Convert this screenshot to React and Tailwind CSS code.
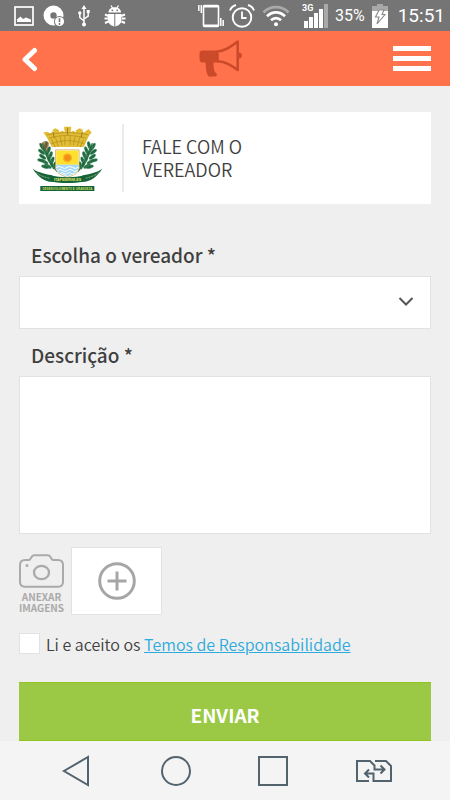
import React from "react";

function ImageIcon() {
  return (
    <svg className="h-5 w-5" viewBox="0 0 20 20" fill="none" aria-hidden="true">
      <rect x="1" y="1" width="18" height="18" stroke="#fff" strokeWidth="1.7" />
      <path d="M3 16V13.5L6.5 10.5 9 13 12 11.5 17 13.5V16Z" fill="#fff" />
    </svg>
  );
}

function DiscIcon() {
  return (
    <svg className="h-[22px] w-[22px]" viewBox="0 0 22 22" aria-hidden="true">
      <path fillRule="evenodd" fill="#fff" d="M10.5 0.5a10 10 0 1 0 0 20a10 10 0 0 0 0-20zm0 6.800a3.200 3.200 0 1 1 0 6.400a3.200 3.200 0 0 1 0-6.400z" />
      <circle cx="16.500" cy="16.500" r="5.500" fill="#757575" />
      <circle cx="16.500" cy="16.500" r="4.600" fill="#fff" />
      <path d="M16.500 13.200v4" stroke="#757575" strokeWidth="1.600" />
      <circle cx="16.500" cy="19" r="0.900" fill="#757575" />
    </svg>
  );
}

function UsbIcon() {
  return (
    <svg className="h-[22px] w-3" viewBox="0 0 12 22" fill="none" stroke="#fff" strokeWidth="1.500" aria-hidden="true">
      <path d="M6 3v16M6 16L1.800 12.500V8M6 14l4.200-3V7" />
      <path d="M6 0L8.500 4H3.500Z" fill="#fff" stroke="none" />
      <circle cx="6" cy="19.500" r="2" fill="#fff" stroke="none" />
      <circle cx="1.800" cy="8" r="1.700" fill="#fff" stroke="none" />
      <rect x="8.700" y="5" width="3" height="3" fill="#fff" stroke="none" />
    </svg>
  );
}

function BugIcon() {
  return (
    <svg className="h-[22px] w-[22px]" viewBox="0 0 22 22" aria-hidden="true">
      <path d="M7 0.500l1.500 2.500M14.500 0.500L13 3" stroke="#fff" strokeWidth="1.300" />
      <path d="M4.500 7.500C4.500 0.500 17 0.500 17 7.500Z" fill="#fff" />
      <path d="M4 9h13.500v5.500c0 9-13.500 9-13.500 0Z" fill="#fff" />
      <path d="M0.500 13.500H4M1 9.500L4.500 11M1 18l3.500-1.500M21.500 13.500H18M21 9.500L17 11M21 18l-3.500-1.500" stroke="#fff" strokeWidth="2" />
      <path d="M10.800 9v12" stroke="#757575" strokeWidth="1" />
      <circle cx="8.300" cy="5.300" r="0.900" fill="#757575" />
      <circle cx="13.200" cy="5.300" r="0.900" fill="#757575" />
    </svg>
  );
}

function VibrateIcon() {
  return (
    <svg className="h-6 w-[26px]" viewBox="0 0 26 24" fill="none" stroke="#fff" aria-hidden="true">
      <rect x="5.500" y="1.500" width="15" height="21" rx="1" strokeWidth="1.600" />
      <path d="M5.500 2.200h15M5.500 21.800h15" strokeWidth="2.600" />
      <path d="M3.300 1v8M0.800 1v6M22.800 14v8M25.200 16v6" strokeWidth="1.500" />
    </svg>
  );
}

function AlarmIcon() {
  return (
    <svg className="h-6 w-[26px]" viewBox="0 0 26 24" fill="none" stroke="#fff" aria-hidden="true">
      <circle cx="13" cy="13.500" r="9.300" strokeWidth="1.900" />
      <path d="M13 7.500V14h4.500" strokeWidth="1.800" />
      <path d="M1 6.500C2 3.500 4 1.800 7 1M25 6.500c-1-3-3-4.700-6-5.500" strokeWidth="1.900" />
    </svg>
  );
}

function WifiIcon() {
  return (
    <svg className="h-[22px] w-7" viewBox="0 0 28 22" fill="none" strokeWidth="2.700" aria-hidden="true">
      <path d="M1.500 7.500C8 0.300 20 0.300 26.500 7.500" stroke="#a9a9a9" />
      <path d="M5 11.300c5-5.300 13-5.300 18 0M9 15.300c3-3 7-3 10 0" stroke="#fff" />
      <circle cx="14" cy="19.300" r="2" fill="#fff" />
    </svg>
  );
}

function SignalIcon() {
  return (
    <svg className="h-6 w-[26px]" viewBox="0 0 26 24" aria-hidden="true">
      <path fill="#fff" d="M2 17h4v7H2zM7 13h4v11H7zM12 9h4v15h-4zM17 5h4v19h-4z" />
      <path fill="#a9a9a9" d="M22 0h4v24h-4z" />
      <text x="0" y="7" fill="#fff" className="font-['Roboto',sans-serif] text-[9px] font-bold">3G</text>
    </svg>
  );
}

function BatteryIcon() {
  return (
    <svg className="h-6 w-4" viewBox="0 0 16 24" aria-hidden="true">
      <path fill="#a9a9a9" d="M5 0h6v2h5v6H0V2h5z" />
      <path fill="#fff" d="M0 7h16v17H0z" />
      <path d="M7 6h5l-2 4.500h3L5 20l2-7H3.500Z" fill="#fff" stroke="#8a8a8a" strokeWidth="1.100" />
    </svg>
  );
}

function MegaphoneIcon() {
  return (
    <svg className="h-[38px] w-11" viewBox="0 0 44 38" aria-hidden="true">
      <path fill="#cb4a2a" d="M4 10.500H18.500V22.500H14.500C14.500 28 15 31.500 17.500 33.500C18.500 35 17.500 36.500 16 36.500H9.500C7 33 7 27 6.500 22.500H4C1.500 22.500 0.500 21.500 0.500 19V14C0.500 11.500 1.500 10.500 4 10.500Z" />
      <path d="M18.500 11.500C27 11 32.500 6 38.700 1.500V30C32.500 25.500 27 21.500 18.500 21.200Z" fill="none" stroke="#cb4a2a" strokeWidth="2.500" strokeLinejoin="round" />
      <path fill="#cb4a2a" d="M40 12.500c4 0 4 6 0 6z" />
    </svg>
  );
}

const leaves = [
  [96, 136, 60], [108, 132, 105], [95, 152, 35], [116, 147, 110], [98, 167, 35],
  [122, 162, 110], [104, 182, 30], [127, 178, 110], [114, 195, 30], [134, 193, 105],
  [103, 143, 75], [111, 159, 70], [117, 174, 70], [125, 189, 65], [94, 178, 15], [106, 197, 15],
];

function Branch() {
  return (
    <g>
      <path d="M98 126C108 165 121 190 142 211" fill="none" stroke="#17643a" strokeWidth="4" />
      {leaves.map(([x, y, a]) => (
        <ellipse key={x + "-" + y} cx={x} cy={y} rx="12" ry="5" fill="#1d6b3f" stroke="#8fb399" strokeWidth="0.800" transform={`rotate(${a} ${x} ${y})`} />
      ))}
    </g>
  );
}

function CoatOfArms() {
  return (
    <svg className="h-[67px] w-[71px] shrink-0" viewBox="66 72 214 200" role="img" aria-label="Brasão de Itapemirim">
      <path d="M100 94L112 91 120 96 132 90 127 86 137 81 148 87 147 93 158 88 165 93 163 83 163 76H184V83L182 93 190 88 199 93 198 87 210 81 220 86 215 94 225 92 236 83 246 94 238 103 222 137H126L110 107Z" fill="#e0bd35" />
      <path d="M111 101C150 92 195 92 236 101M117 111C150 100 195 100 230 111" fill="none" stroke="#b8921f" strokeWidth="2.500" />
      <path d="M125 114L136 138M137 109l8 27M151 106l5 26M165 105v26M181 105v26M196 106l-5 26M210 109l-8 27M222 114l-11 24M123 128c28-13 72-13 101 0" fill="none" stroke="#b8921f" strokeWidth="2.500" />
      <path d="M129 91l4 19M173 79v22M218 91l-4 19" stroke="#a37f1b" strokeWidth="3" />
      <Branch />
      <g transform="translate(346 0) scale(-1 1)"><Branch /></g>
      <path d="M94 127c5-9 16-11 24-1l-5 25c-8-4-14-12-19-24Z" fill="#8b5e32" opacity=".65" />
      <path d="M137 146H208V198C208 216 192 222 173 229C154 222 137 216 137 198Z" fill="#f7fcff" stroke="#bd9b40" strokeWidth="2" />
      <path d="M139 148H206V191H139Z" fill="#ffe02f" />
      <path d="M139 191H206V200C205 214 190 219 173 225C155 219 140 214 139 200Z" fill="#a4d8f3" />
      <path d="M140 199q8-6 16 0t16 0 16 0 17 0M143 208q8-6 15 0t15 0 15 0 15 0M151 217q6-5 11 0t11 0 11 0 11 0" stroke="#fff" strokeWidth="3" fill="none" />
      <circle cx="173" cy="170" r="11" fill="#f79b16" stroke="#f79b16" strokeWidth="6" strokeDasharray="2 2" />
      <circle cx="173" cy="170" r="7" fill="#ef8c1c" />
      <path d="M68 202C84 215 102 217 127 223L132 242C111 245 84 230 68 202ZM278 202C262 215 244 217 219 223L214 242C235 245 262 230 278 202Z" fill="#17643a" />
      <path d="M120 222C151 231 195 231 226 222L221 242C190 247 155 247 125 242Z" fill="#126536" />
      <path d="M78 215c14 10 28 13 42 17M268 215c-14 10-28 13-42 17" fill="none" stroke="#d7e1b3" strokeWidth="2" strokeDasharray="3 2" />
      <text x="173" y="239" textAnchor="middle" fill="#f1e46b" className="font-['Liberation_Sans',sans-serif] text-[11px] font-bold">ITAPEMIRIM-ES</text>
      <path d="M91 255H254V270H91Z" fill="#126536" />
      <text x="173" y="266" textAnchor="middle" fill="#d5da62" className="font-['Liberation_Sans',sans-serif] text-[9px] font-bold">DESENVOLVIMENTO E GRANDEZA</text>
    </svg>
  );
}

function CameraIcon() {
  return (
    <svg className="h-[34px] w-[45px]" viewBox="0 0 45 34" fill="none" stroke="#aaa" strokeWidth="2" aria-hidden="true">
      <path d="M6 6H10C12 6 12 1.200 15 1.200H29C32 1.200 32 6 34 6H39C42 6 44 8 44 11V28C44 31 42 32.700 39 32.700H6C3 32.700 1 31 1 28V11C1 8 3 6 6 6Z" />
      <ellipse cx="22.500" cy="18.500" rx="7.500" ry="6.700" strokeWidth="2.300" />
      <circle cx="8" cy="11.500" r="1.500" fill="#aaa" stroke="none" />
    </svg>
  );
}

export default function App() {
  return (
    <div className="flex min-h-screen flex-col bg-[#efefef] font-['Noto_Sans_CJK_SC',sans-serif] text-[#3f3f3f]">
      <div className="flex h-[31px] shrink-0 items-center justify-between bg-[#757575] pr-[5px] pl-[14px] font-['Roboto',sans-serif] text-white">
        <div className="flex items-center">
          <ImageIcon />
          <div className="ml-[9px]"><DiscIcon /></div>
          <div className="ml-[13px]"><UsbIcon /></div>
          <div className="ml-[14px]"><BugIcon /></div>
        </div>
        <div className="flex items-center">
          <VibrateIcon />
          <div className="ml-[5px]"><AlarmIcon /></div>
          <div className="ml-[7px]"><WifiIcon /></div>
          <div className="ml-3"><SignalIcon /></div>
          <span className="ml-[7px] text-base leading-6">35%</span>
          <div className="ml-[7px]"><BatteryIcon /></div>
          <span className="ml-[10px] text-[19px] leading-6">15:51</span>
        </div>
      </div>

      <header className="flex h-[55px] shrink-0 items-center justify-between bg-[#ff724c] px-[19px]">
        <button type="button" aria-label="Voltar" className="flex w-[30px] items-center">
          <svg className="h-[26px] w-5" viewBox="0 0 20 26" fill="none" stroke="#fff" strokeWidth="5" strokeLinecap="round" strokeLinejoin="round" aria-hidden="true">
            <path d="M15.500 4.500L6 13.500L15.500 22.500" />
          </svg>
        </button>
        <MegaphoneIcon />
        <button type="button" aria-label="Menu" className="flex w-[38px] flex-col gap-[5px]">
          <span className="h-[5px] bg-white" />
          <span className="h-[5px] bg-white" />
          <span className="h-[5px] bg-white" />
        </button>
      </header>

      <main className="flex flex-1 flex-col px-[19px] pt-[26px]">
        <section className="flex h-[92px] items-center bg-white pl-[13px]">
          <CoatOfArms />
          <div className="ml-[19px] h-[68px] w-[2px] bg-[#e8ecec]" />
          <h1 className="ml-[18px] w-32 text-lg leading-[23px] font-[350]">FALE COM O VEREADOR</h1>
        </section>

        <form className="flex flex-col" onSubmit={(e) => e.preventDefault()}>
          <label htmlFor="vereador" className="mt-[39px] ml-3 text-[19px] leading-6 font-medium">Escolha o vereador *</label>
          <div className="mt-[9px] grid items-center">
            <select id="vereador" className="col-start-1 row-start-1 h-[53px] w-full appearance-none border border-[#e2e2e2] bg-white px-3">
              <option value=""></option>
            </select>
            <svg className="pointer-events-none col-start-1 row-start-1 mr-[17px] h-4 w-4 justify-self-end" viewBox="0 0 16 16" fill="none" stroke="#555" strokeWidth="2" aria-hidden="true">
              <path d="M1.500 3L8 9.500l6.500-6.500" />
            </svg>
          </div>

          <label htmlFor="descricao" className="mt-[14px] ml-3 text-[19px] leading-6 font-medium">Descrição *</label>
          <textarea id="descricao" className="mt-[9px] h-[158px] w-full resize-none border border-[#e2e2e2] bg-white p-3" />

          <div className="mt-[13px] flex h-[68px] items-center">
            <div className="flex w-[45px] flex-col items-center pt-1">
              <CameraIcon />
              <p className="mt-[3px] text-center text-[10px] leading-[11px] font-bold text-[#aaa]">ANEXAR IMAGENS</p>
            </div>
            <button type="button" aria-label="Adicionar imagem" className="ml-[7px] flex h-[68px] w-[91px] items-center justify-center border border-[#dfe3e3] bg-white">
              <svg className="h-[38px] w-[38px]" viewBox="0 0 38 38" fill="none" stroke="#a6a6a6" strokeWidth="3" aria-hidden="true">
                <circle cx="19" cy="19" r="17.300" />
                <path d="M9.500 19h19M19 9.500v19" />
              </svg>
            </button>
          </div>

          <div className="mt-[18px] flex h-[21px] items-center">
            <input id="aceito" type="checkbox" className="h-[21px] w-[21px] appearance-none border border-[#dfe3e3] bg-white" />
            <label htmlFor="aceito" className="ml-[6px] text-base leading-6 font-[350] whitespace-pre">Li e aceito os </label>
            <a href="#termos" className="text-base leading-6 font-[350] text-[#2eaadc] underline">Temos de Responsabilidade</a>
          </div>

          <button type="submit" className="mt-7 h-[59px] border-y border-[#91c41c] bg-[#9bc945] pt-[6px] text-[19px] leading-6 font-bold text-white">ENVIAR</button>
        </form>
      </main>

      <nav className="flex h-[59px] shrink-0 items-center justify-between bg-[#f4f4f4] pr-[57px] pl-[62px] text-[#53636e]">
        <button type="button" aria-label="Voltar">
          <svg className="h-8 w-8" viewBox="0 0 32 32" fill="none" stroke="currentColor" strokeWidth="2" aria-hidden="true"><path d="M26 2v28L2 16Z" /></svg>
        </button>
        <button type="button" aria-label="Início">
          <svg className="h-8 w-8" viewBox="0 0 32 32" fill="none" stroke="currentColor" strokeWidth="2" aria-hidden="true"><circle cx="16" cy="16" r="14" /></svg>
        </button>
        <button type="button" aria-label="Aplicativos recentes">
          <svg className="h-8 w-8" viewBox="0 0 32 32" fill="none" stroke="currentColor" strokeWidth="2" aria-hidden="true"><rect x="2" y="2" width="28" height="28" /></svg>
        </button>
        <button type="button" aria-label="Trocar cartão SIM">
          <svg className="h-6 w-[38px]" viewBox="0 0 38 24" fill="none" stroke="currentColor" strokeWidth="2" aria-hidden="true">
            <path d="M14 22H2V2h13l4.500 4.500v4H29M25.500 6.500l4 4-4 4M20 2h11l5 5v15H18.500v-7.500H10M14 10.500l-4 4 4 4" />
          </svg>
        </button>
      </nav>
    </div>
  );
}
